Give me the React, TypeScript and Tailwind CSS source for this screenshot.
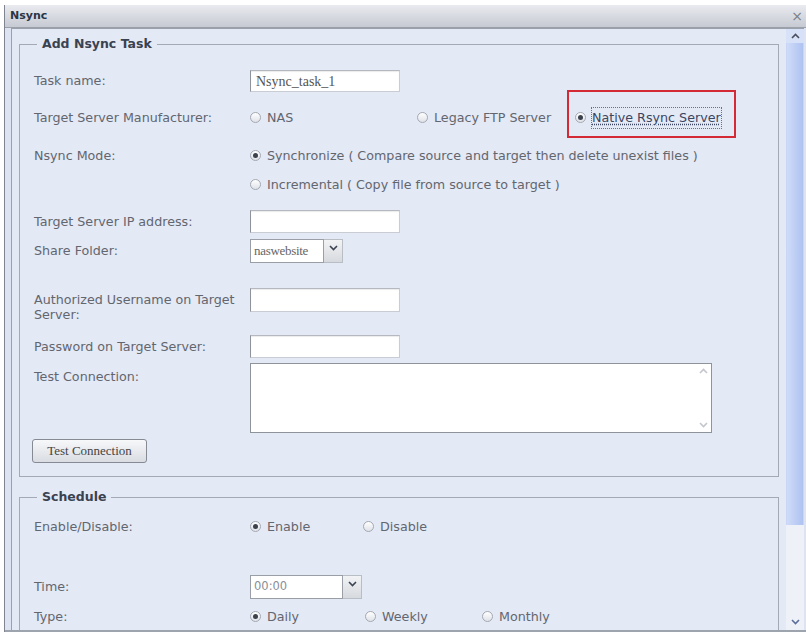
import React from 'react';

const Radio = ({ checked }: { checked?: boolean }) => (
  <span className="flex h-[11px] w-[11px] shrink-0 items-center justify-center rounded-full border border-[#a3a8b1] bg-linear-to-b from-white to-[#dfe2e8]">
    {checked && <span className="h-[5px] w-[5px] rounded-full bg-[#3c424c]" />}
  </span>
);

const Chevron = ({ up, className }: { up?: boolean; className?: string }) => (
  <svg width="9" height="6" viewBox="0 0 9 6" className={className}>
    <path
      d={up ? 'M1 5 L4.5 1.5 L8 5' : 'M1 1 L4.5 4.5 L8 1'}
      fill="none"
      stroke="currentColor"
      strokeWidth="1.6"
    />
  </svg>
);

const Label = ({ children, className }: { children: React.ReactNode; className?: string }) => (
  <div className={`w-[216px] shrink-0 ${className ?? ''}`}>{children}</div>
);

const TextBox = ({ value, height = 'h-full' }: { value?: string; height?: string }) => (
  <div
    className={`flex ${height} w-[150px] items-center border border-[#c9ccd2] border-l-[#8f939a] border-t-[#b5b8be] bg-white pl-[5px] font-['Liberation_Serif',serif] text-[14px] text-[#555] shadow-[inset_0_1px_1px_rgba(0,0,0,0.08)]`}
  >
    {value}
  </div>
);

const Select = ({ value, width, serif }: { value: string; width: string; serif?: boolean }) => (
  <div className="flex h-full items-stretch">
    <div
      className={`flex ${width} items-center border border-[#9a9ea6] bg-white pl-[3px] ${serif ? "font-['Liberation_Serif',serif] text-[13px] tracking-[-0.3px] text-[#666]" : 'text-[11.5px] text-[#8a8e96]'}`}
    >
      {value}
    </div>
    <div className="flex w-[19px] items-start justify-center border border-l-0 border-[#b9bdc4] bg-linear-to-b from-[#f2f3f5] to-[#d6d9de] pt-[5px] text-[#3d4350]">
      <Chevron />
    </div>
  </div>
);

const Option = ({
  checked,
  children,
  className,
}: {
  checked?: boolean;
  children: React.ReactNode;
  className?: string;
}) => (
  <div className={`flex items-center gap-[6px] ${className ?? ''}`}>
    <Radio checked={checked} />
    <span>{children}</span>
  </div>
);

export default function App() {
  return (
    <div className="h-[634px] w-[806px] overflow-hidden bg-white pt-[5px] font-['DejaVu_Sans',sans-serif] text-[12.7px] text-[#62666e]">
      <div className="ml-[4px] flex h-[627px] flex-col border-l border-[#7f8590]">
        {/* title bar */}
        <div className="flex h-[23px] shrink-0 items-center justify-between border-b border-[#9ba0a9] bg-linear-to-b from-[#e9ebef] to-[#c6cad2] pl-[5px] pr-[3px]">
          <span className="text-[11px] font-bold text-[#2b3446]">Nsync</span>
          <span className="text-[14px] leading-none text-[#7a7f88]">×</span>
        </div>

        {/* body */}
        <div className="flex min-h-0 flex-1 border-b-2 border-[#9ea4ae] bg-[#dde3f0] pl-[6px] pr-[2px]">
          <div className="min-w-0 flex-1 overflow-hidden border-l border-t border-[#9aa1ad] bg-[#e4e9f6]">
            <fieldset className="mx-[7px] mt-[7px] border border-[#a4aab5] px-[14px] pb-[13px]">
              <legend className="ml-[3px] px-[5px] text-[12.5px] font-bold leading-[16px] text-[#3a4250]">
                Add Nsync Task
              </legend>

              <div className="mt-[18px] flex h-[22px] items-center">
                <Label>Task name:</Label>
                <TextBox value="Nsync_task_1" />
              </div>

              <div className="mt-[16px] flex h-[20px] items-center">
                <Label>Target Server Manufacturer:</Label>
                <Option className="w-[167px]">NAS</Option>
                <Option className="w-[158px]">Legacy FTP Server</Option>
                <div className="relative flex items-center gap-[6px]">
                  <span className="absolute -bottom-[10px] -left-[8px] -right-[15px] -top-[18px] border-2 border-[#d42a35]" />
                  <Radio checked />
                  <span className="text-[#3b4660] underline decoration-dotted outline-1 outline-dotted outline-[#6b7180]">
                    Native Rsync Server
                  </span>
                </div>
              </div>

              <div className="mt-[18px] flex h-[20px] items-center">
                <Label>Nsync Mode:</Label>
                <Option checked>
                  Synchronize ( Compare source and target then delete unexist files )
                </Option>
              </div>

              <div className="mt-[9px] flex h-[20px] items-center">
                <Label> </Label>
                <Option>Incremental ( Copy file from source to target )</Option>
              </div>

              <div className="mt-[15px] flex h-[23px] items-center">
                <Label>Target Server IP address:</Label>
                <TextBox />
              </div>

              <div className="mt-[6px] flex h-[24px] items-center">
                <Label>Share Folder:</Label>
                <Select value="naswebsite" width="w-[74px]" serif />
              </div>

              <div className="mt-[25px] flex h-[34px] items-start">
                <Label className="pt-[4px] leading-[15px]">
                  Authorized Username on Target
                  <br />
                  Server:
                </Label>
                <TextBox height="h-[24px]" />
              </div>

              <div className="mt-[13px] flex h-[23px] items-center">
                <Label>Password on Target Server:</Label>
                <TextBox />
              </div>

              <div className="mt-[5px] flex h-[70px] items-start">
                <Label className="pt-[6px] leading-[16px]">Test Connection:</Label>
                <div className="flex h-full w-[462px] border border-[#8f939a] bg-white">
                  <div className="flex-1" />
                  <div className="flex w-[15px] flex-col items-center justify-between py-[4px] text-[#c3c6cc]">
                    <Chevron up />
                    <Chevron />
                  </div>
                </div>
              </div>

              <div className="mt-[6px] flex h-[24px] items-center">
                <button className="-ml-[2px] h-full w-[115px] rounded-[3px] border border-[#858a93] bg-linear-to-b from-[#f7f8fa] to-[#d9dce2] font-['Liberation_Serif',serif] text-[13px] text-[#444]">
                  Test Connection
                </button>
              </div>
            </fieldset>

            <fieldset className="mx-[7px] mt-[12px] border border-[#a4aab5] px-[14px] pb-[13px]">
              <legend className="ml-[3px] px-[5px] text-[12.5px] font-bold leading-[16px] text-[#3a4250]">
                Schedule
              </legend>

              <div className="mt-[12px] flex h-[20px] items-center">
                <Label>Enable/Disable:</Label>
                <Option checked className="w-[113px]">
                  Enable
                </Option>
                <Option>Disable</Option>
              </div>

              <div className="mt-[38px] flex h-[24px] items-center">
                <Label>Time:</Label>
                <Select value="00:00" width="w-[93px]" />
              </div>

              <div className="mt-[8px] flex h-[20px] items-center">
                <Label>Type:</Label>
                <Option checked className="w-[115px]">
                  Daily
                </Option>
                <Option className="w-[117px]">Weekly</Option>
                <Option>Monthly</Option>
              </div>
            </fieldset>
          </div>

          {/* scrollbar */}
          <div className="flex w-[18px] shrink-0 flex-col border-t border-[#9aa1ad] bg-[#eef1f8]">
            <div className="flex h-[14px] items-center justify-center bg-[#d7e1f7] text-[#4a5060]">
              <Chevron up />
            </div>
            <div className="h-[482px] border-x border-[#c8d5f4] bg-linear-to-r from-[#cfdbf8] to-[#aec3f1]" />
            <div className="flex-1" />
            <div className="flex h-[16px] items-center justify-center text-[#5d6d99]">
              <Chevron />
            </div>
          </div>
        </div>
      </div>
    </div>
  );
}
